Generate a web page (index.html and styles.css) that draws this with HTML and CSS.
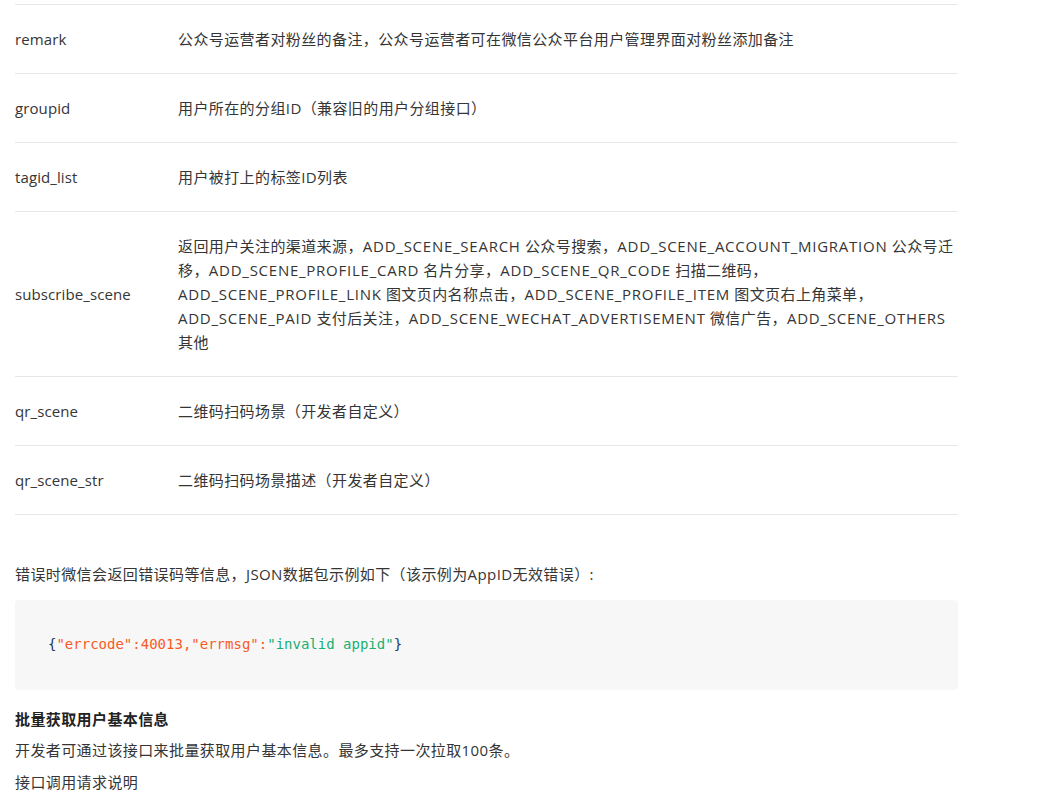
FILE: index.html
```html
<!DOCTYPE html>
<html lang="zh-CN">
<head>
<meta charset="utf-8">
<title>用户基本信息</title>
<link rel="stylesheet" href="styles.css">
</head>
<body>
<main class="doc">
  <div class="table">
    <div class="row"><div class="name">remark</div><div class="desc">公众号运营者对粉丝的备注，公众号运营者可在微信公众平台用户管理界面对粉丝添加备注</div></div>
    <div class="row"><div class="name">groupid</div><div class="desc">用户所在的分组ID（兼容旧的用户分组接口）</div></div>
    <div class="row"><div class="name">tagid_list</div><div class="desc">用户被打上的标签ID列表</div></div>
    <div class="row"><div class="name">subscribe_scene</div><div class="desc">返回用户关注的渠道来源，<span class="const">ADD_SCENE_SEARCH</span> 公众号搜索，<span class="const">ADD_SCENE_ACCOUNT_MIGRATION</span> 公众号迁移，<span class="const">ADD_SCENE_PROFILE_CARD</span> 名片分享，<span class="const">ADD_SCENE_QR_CODE</span> 扫描二维码，<span class="const">ADD_SCENE_PROFILE_LINK</span> 图文页内名称点击，<span class="const">ADD_SCENE_PROFILE_ITEM</span> 图文页右上角菜单，<span class="const">ADD_SCENE_PAID</span> 支付后关注，<span class="const">ADD_SCENE_WECHAT_ADVERTISEMENT</span> 微信广告，<span class="const">ADD_SCENE_OTHERS</span> 其他</div></div>
    <div class="row"><div class="name">qr_scene</div><div class="desc">二维码扫码场景（开发者自定义）</div></div>
    <div class="row"><div class="name">qr_scene_str</div><div class="desc">二维码扫码场景描述（开发者自定义）</div></div>
  </div>
  <p class="lead">错误时微信会返回错误码等信息，JSON数据包示例如下（该示例为AppID无效错误）:</p>
  <pre class="code"><code><span class="p">{</span><span class="s">"errcode"</span><span class="o">:</span><span class="n">40013</span><span class="o">,</span><span class="s">"errmsg"</span><span class="o">:</span><span class="g">"invalid appid"</span><span class="p">}</span></code></pre>
  <h4 class="heading">批量获取用户基本信息</h4>
  <p class="text">开发者可通过该接口来批量获取用户基本信息。最多支持一次拉取100条。</p>
  <p class="text">接口调用请求说明</p>
</main>
</body>
</html>
```

FILE: styles.css
```css
html, body {
  margin: 0;
  padding: 0;
  background: #fff;
}
body {
  font-family: "Open Sans", "Noto Sans CJK SC", sans-serif;
  font-size: 15px;
  letter-spacing: 0.4px;
  color: #353535;
  line-height: 24px;
}
.doc {
  width: 943px;
  padding: 4px 0 0 15px;
}
.table {
  border-top: 1px solid #e7e7e7;
}
.row {
  display: grid;
  grid-template-columns: 163px 1fr;
  align-items: center;
  padding: 22px 0;
  border-bottom: 1px solid #e7e7e7;
}
.name {
  letter-spacing: 0.1px;
}
.const {
  letter-spacing: 0.75px;
}
.lead {
  margin: 47px 0 14px;
}
.code {
  margin: 0;
  background: #f7f7f7;
  border-radius: 4px;
  padding: 32px 33px 33px;
  font-family: "Liberation Mono", monospace;
  font-size: 14px;
  letter-spacing: 0;
  line-height: 24px;
  color: #1f3a5a;
}
.code .s, .code .n, .code .o { color: #f85b24; }
.code .g { color: #1aaf72; }
.code .p { color: #1f3a5a; }
.heading {
  margin: 17px 0 7px;
  font-size: 15px;
  font-weight: bold;
  color: #222;
}
.text {
  margin: 0 0 8px;
}
```
